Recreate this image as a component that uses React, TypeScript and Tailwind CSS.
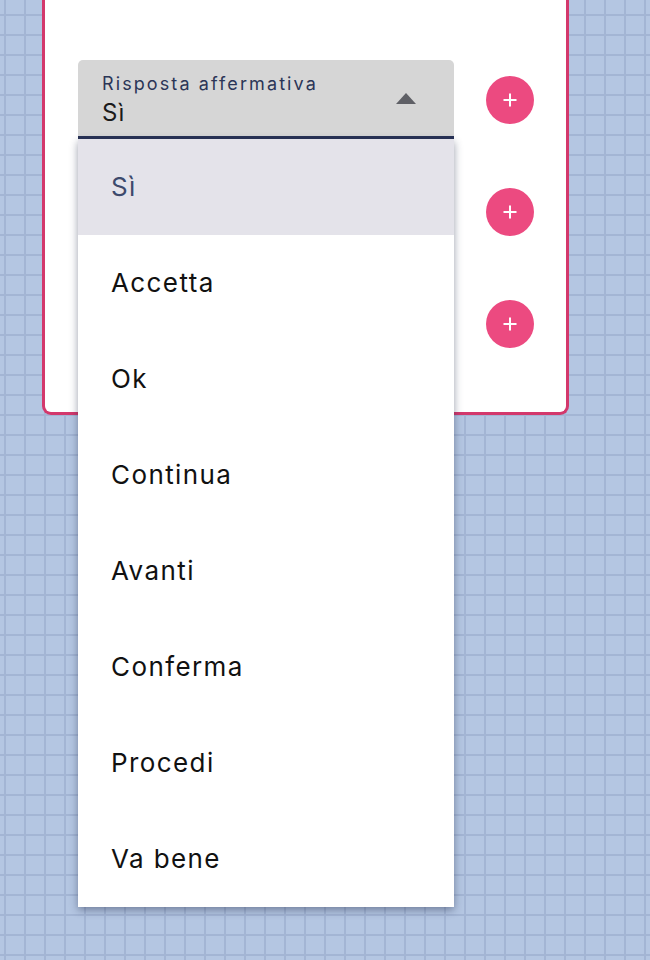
import { useState } from "react";

const options = ["Sì", "Accetta", "Ok", "Continua", "Avanti", "Conferma", "Procedi", "Va bene"];

function PlusButton() {
  return (
    <button
      type="button"
      className="w-12 h-12 shrink-0 rounded-full bg-[#ec4a80] flex items-center justify-center"
    >
      <svg width="16" height="16" viewBox="0 0 16 16">
        <path d="M8 1.5v13M1.5 8h13" stroke="white" strokeWidth="2" />
      </svg>
    </button>
  );
}

// the fields below the first one sit under the open menu, so they're drawn empty
function SelectField({ open, value }: { open?: boolean; value?: string }) {
  return (
    <div className="relative w-[376px] h-[79px] shrink-0">
      <div className="h-full bg-[#d6d6d6] rounded-t-[5px] border-b-[3px] border-[#283255] pl-6 pr-10 pt-[13px]">
        {value && (
          <>
            <div className="text-[18px] leading-[22px] tracking-[2.1px] text-[#2b3557]">Risposta affermativa</div>
            <div className="mt-[3px] text-[24px] leading-[30px] tracking-[1.2px] text-[#1b1b1b]">{value}</div>
          </>
        )}
        <svg
          className="absolute left-[318px] top-[33px]"
          width="20"
          height="11"
          viewBox="0 0 20 11"
        >
          <path d="M0 11L10 0l10 11z" fill="#5f6066" />
        </svg>
      </div>
      {open && (
        <ul className="absolute left-0 top-full w-[376px] bg-white z-10 shadow-[0_3px_8px_rgba(30,40,70,0.45)]">
          {options.map((o, i) => (
            <li
              key={o}
              className={
                i === 0
                  ? "h-24 flex items-center pl-[33px] bg-[#e4e3ea] text-[#3d4a6d]"
                  : "h-24 flex items-center pl-[33px] text-[#111111]"
              }
            >
              <span className="text-[26px] leading-8 tracking-[1.4px]">{o}</span>
            </li>
          ))}
        </ul>
      )}
    </div>
  );
}

export default function App() {
  const [value] = useState("Sì");

  return (
    <div
      className="min-h-screen overflow-hidden bg-[#b4c6e2] [background-image:linear-gradient(to_right,#a3b5d4_2px,transparent_2px),linear-gradient(to_bottom,#a3b5d4_2px,transparent_2px)] [background-size:20px_20px] [background-position:4px_14px]"
      style={{ fontFamily: "Inter, 'Noto Sans', sans-serif" }}
    >
      <div className="ml-[42px] w-[527px] h-[415px] bg-white border-[3px] border-t-0 border-[#d3386c] rounded-b-[9px] pl-[33px] pt-[60px]">
        <div className="flex flex-col gap-[33px]">
          <div className="flex items-center gap-8">
            <SelectField open value={value} />
            <PlusButton />
          </div>
          <div className="flex items-center gap-8">
            <SelectField />
            <PlusButton />
          </div>
          <div className="flex items-center gap-8">
            <SelectField />
            <PlusButton />
          </div>
        </div>
      </div>
    </div>
  );
}
